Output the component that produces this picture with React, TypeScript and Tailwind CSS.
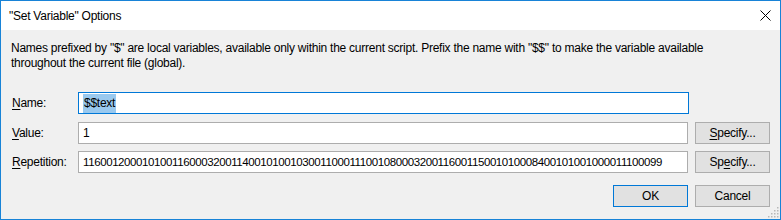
import React from "react";

const REPETITION =
  "11600120001010011600032001140010100103001100011100108000320011600115001010008400101001000011100099";

function Field({
  value,
  focused,
  selected,
  digits,
}: {
  value: string;
  focused?: boolean;
  selected?: boolean;
  digits?: boolean;
}) {
  return (
    <div
      className={`flex h-[22px] min-w-0 flex-1 items-center overflow-hidden bg-white px-[4px] ${
        focused ? "border border-[#0078d7]" : "border border-[#adadad]"
      } ${digits ? "text-[11.5px] tracking-[-0.4px]" : ""}`}
    >
      {selected ? (
        <span className="bg-[#99c9ef] px-[1px] leading-[19px] text-black">{value}</span>
      ) : (
        <span className="whitespace-nowrap leading-[16px]">{value}</span>
      )}
    </div>
  );
}

function Btn({
  children,
  primary,
}: {
  children: React.ReactNode;
  primary?: boolean;
}) {
  return (
    <button
      type="button"
      className={`flex h-[22px] w-[75px] shrink-0 items-center justify-center bg-[#e1e1e1] text-black ${
        primary ? "border border-[#0078d7]" : "border border-[#adadad]"
      }`}
    >
      {children}
    </button>
  );
}

function Label({ accel, rest }: { accel: string; rest: string }) {
  return (
    <div className="w-[70px] shrink-0 pl-[11px]">
      <span className="underline underline-offset-[2px]">{accel}</span>
      {rest}
    </div>
  );
}

export default function App() {
  return (
    <div className="flex h-[220px] w-[781px] flex-col border border-[#1883d7] bg-[#f0f0f0] font-['Liberation_Sans',sans-serif] text-[12px] tracking-[-0.25px] text-black">
      <div className="flex h-[29px] shrink-0 items-center justify-between bg-white pl-[8px] pr-[9px]">
        <span className="text-[12px]">"Set Variable" Options</span>
        <svg width="11" height="11" viewBox="0 0 11 11">
          <path d="M0.5 0.5 L10.5 10.5 M10.5 0.5 L0.5 10.5" stroke="#000" strokeWidth="1" />
        </svg>
      </div>

      <div className="relative flex flex-1 flex-col">
        <p className="pl-[10px] pr-[60px] pt-[11px] leading-[15px]">
          Names prefixed by "$" are local variables, available only within the current script. Prefix the name with
          "$$" to make the variable available throughout the current file (global).
        </p>

        <div className="mt-[21px] flex items-center gap-[7px] pr-[91px]">
          <Label accel="N" rest="ame:" />
          <Field value="$$text" focused selected />
        </div>

        <div className="mt-[8px] flex items-center gap-[7px] pr-[10px]">
          <Label accel="V" rest="alue:" />
          <Field value="1" />
          <Btn>
            <span>
              <span className="underline underline-offset-[2px]">S</span>pecify...
            </span>
          </Btn>
        </div>

        <div className="mt-[7px] flex items-center gap-[7px] pr-[10px]">
          <Label accel="R" rest="epetition:" />
          <Field value={REPETITION} digits />
          <Btn>
            <span>
              Sp<span className="underline underline-offset-[2px]">e</span>cify...
            </span>
          </Btn>
        </div>

        <div className="mt-[12px] flex justify-end gap-[7px] pr-[10px]">
          <Btn primary>OK</Btn>
          <Btn>Cancel</Btn>
        </div>

        <svg className="absolute bottom-[1px] right-[1px]" width="11" height="11" viewBox="0 0 11 11">
          {[
            [9, 1],
            [9, 4],
            [6, 4],
            [9, 7],
            [6, 7],
            [3, 7],
            [9, 10],
            [6, 10],
            [3, 10],
            [0, 10],
          ].map(([x, y], i) => (
            <rect key={i} x={x} y={y - 1} width="1.5" height="1.5" fill="#b8b8b8" />
          ))}
        </svg>
      </div>
    </div>
  );
}
